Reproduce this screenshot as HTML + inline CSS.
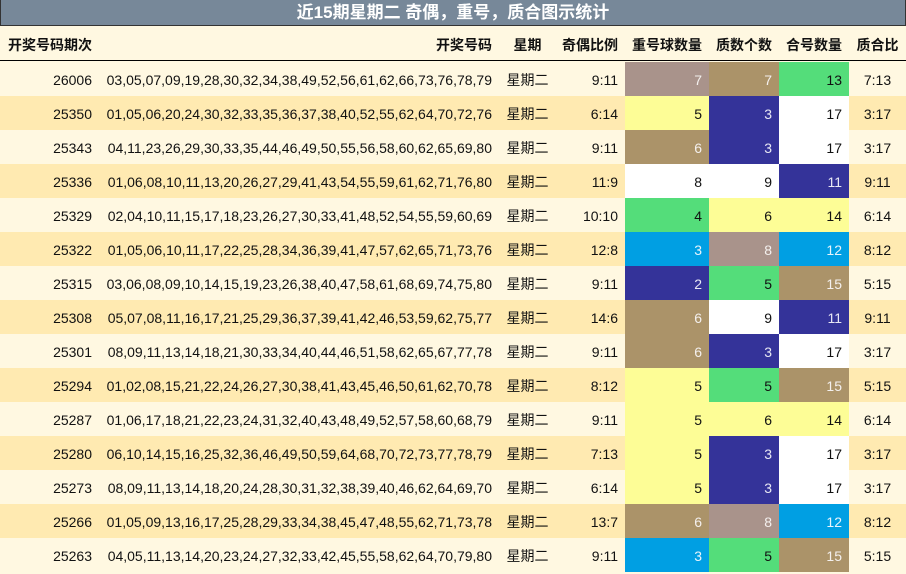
<!DOCTYPE html><html><head><meta charset="utf-8"><style>
*{margin:0;padding:0;box-sizing:border-box}
body{width:906px;height:573px;background:#fff8e1;font-family:"Liberation Sans","Noto Sans CJK SC",sans-serif;overflow:hidden;position:relative}
.t{position:absolute;left:0;top:0;width:906px;height:26px;background:#778899;border:1px solid #333;border-top:none;color:#fff;font-weight:bold;font-size:17px;text-align:center;line-height:26px}
.r{position:absolute;left:0;width:906px;height:34px;font-size:14px;color:#111}
.r div{position:absolute;top:0;height:34px;line-height:36px;white-space:nowrap}
.h{top:27px;height:34px;border-bottom:1px solid #000;font-weight:bold;font-size:14px}
.a{left:0;width:92px;text-align:right}
.b{left:100px;width:392px;text-align:right}
.c{left:500px;width:55px;text-align:center}
.d{left:555px;width:63px;text-align:right}
.e{left:625px;width:84px;text-align:right;padding-right:7px}
.f{left:709px;width:70px;text-align:right;padding-right:7px}
.g{left:779px;width:70px;text-align:right;padding-right:7px}
.k{left:849px;width:57px;text-align:center}
.o{background:#ffeab1}
.P{background:#a9938b;color:#f4f0ee}.T{background:#ab9369;color:#f4f0ee}.G{background:#54dd7a}.Y{background:#fdfd96}.N{background:#343399;color:#e8e8f4}.B{background:#009fe3;color:#e8f4fc}.W{background:#fff}
.h div{height:34px;line-height:37px}
</style></head><body>
<div class="t">近15期星期二 奇偶，重号，质合图示统计</div>
<div class="r h"><div style="left:8px">开奖号码期次</div><div class="b">开奖号码</div><div class="c">星期</div><div class="d">奇偶比例</div><div class="e">重号球数量</div><div class="f">质数个数</div><div class="g">合号数量</div><div class="k">质合比</div></div>
<div class="r" style="top:62px"><div class="a">26006</div><div class="b">03,05,07,09,19,28,30,32,34,38,49,52,56,61,62,66,73,76,78,79</div><div class="c">星期二</div><div class="d">9:11</div><div class="e P">7</div><div class="f T">7</div><div class="g G">13</div><div class="k">7:13</div></div>
<div class="r o" style="top:96px"><div class="a">25350</div><div class="b">01,05,06,20,24,30,32,33,35,36,37,38,40,52,55,62,64,70,72,76</div><div class="c">星期二</div><div class="d">6:14</div><div class="e Y">5</div><div class="f N">3</div><div class="g W">17</div><div class="k">3:17</div></div>
<div class="r" style="top:130px"><div class="a">25343</div><div class="b">04,11,23,26,29,30,33,35,44,46,49,50,55,56,58,60,62,65,69,80</div><div class="c">星期二</div><div class="d">9:11</div><div class="e T">6</div><div class="f N">3</div><div class="g W">17</div><div class="k">3:17</div></div>
<div class="r o" style="top:164px"><div class="a">25336</div><div class="b">01,06,08,10,11,13,20,26,27,29,41,43,54,55,59,61,62,71,76,80</div><div class="c">星期二</div><div class="d">11:9</div><div class="e W">8</div><div class="f W">9</div><div class="g N">11</div><div class="k">9:11</div></div>
<div class="r" style="top:198px"><div class="a">25329</div><div class="b">02,04,10,11,15,17,18,23,26,27,30,33,41,48,52,54,55,59,60,69</div><div class="c">星期二</div><div class="d">10:10</div><div class="e G">4</div><div class="f Y">6</div><div class="g Y">14</div><div class="k">6:14</div></div>
<div class="r o" style="top:232px"><div class="a">25322</div><div class="b">01,05,06,10,11,17,22,25,28,34,36,39,41,47,57,62,65,71,73,76</div><div class="c">星期二</div><div class="d">12:8</div><div class="e B">3</div><div class="f P">8</div><div class="g B">12</div><div class="k">8:12</div></div>
<div class="r" style="top:266px"><div class="a">25315</div><div class="b">03,06,08,09,10,14,15,19,23,26,38,40,47,58,61,68,69,74,75,80</div><div class="c">星期二</div><div class="d">9:11</div><div class="e N">2</div><div class="f G">5</div><div class="g T">15</div><div class="k">5:15</div></div>
<div class="r o" style="top:300px"><div class="a">25308</div><div class="b">05,07,08,11,16,17,21,25,29,36,37,39,41,42,46,53,59,62,75,77</div><div class="c">星期二</div><div class="d">14:6</div><div class="e T">6</div><div class="f W">9</div><div class="g N">11</div><div class="k">9:11</div></div>
<div class="r" style="top:334px"><div class="a">25301</div><div class="b">08,09,11,13,14,18,21,30,33,34,40,44,46,51,58,62,65,67,77,78</div><div class="c">星期二</div><div class="d">9:11</div><div class="e T">6</div><div class="f N">3</div><div class="g W">17</div><div class="k">3:17</div></div>
<div class="r o" style="top:368px"><div class="a">25294</div><div class="b">01,02,08,15,21,22,24,26,27,30,38,41,43,45,46,50,61,62,70,78</div><div class="c">星期二</div><div class="d">8:12</div><div class="e Y">5</div><div class="f G">5</div><div class="g T">15</div><div class="k">5:15</div></div>
<div class="r" style="top:402px"><div class="a">25287</div><div class="b">01,06,17,18,21,22,23,24,31,32,40,43,48,49,52,57,58,60,68,79</div><div class="c">星期二</div><div class="d">9:11</div><div class="e Y">5</div><div class="f Y">6</div><div class="g Y">14</div><div class="k">6:14</div></div>
<div class="r o" style="top:436px"><div class="a">25280</div><div class="b">06,10,14,15,16,25,32,36,46,49,50,59,64,68,70,72,73,77,78,79</div><div class="c">星期二</div><div class="d">7:13</div><div class="e Y">5</div><div class="f N">3</div><div class="g W">17</div><div class="k">3:17</div></div>
<div class="r" style="top:470px"><div class="a">25273</div><div class="b">08,09,11,13,14,18,20,24,28,30,31,32,38,39,40,46,62,64,69,70</div><div class="c">星期二</div><div class="d">6:14</div><div class="e Y">5</div><div class="f N">3</div><div class="g W">17</div><div class="k">3:17</div></div>
<div class="r o" style="top:504px"><div class="a">25266</div><div class="b">01,05,09,13,16,17,25,28,29,33,34,38,45,47,48,55,62,71,73,78</div><div class="c">星期二</div><div class="d">13:7</div><div class="e T">6</div><div class="f P">8</div><div class="g B">12</div><div class="k">8:12</div></div>
<div class="r" style="top:538px"><div class="a">25263</div><div class="b">04,05,11,13,14,20,23,24,27,32,33,42,45,55,58,62,64,70,79,80</div><div class="c">星期二</div><div class="d">9:11</div><div class="e B">3</div><div class="f G">5</div><div class="g T">15</div><div class="k">5:15</div></div>
</body></html>
